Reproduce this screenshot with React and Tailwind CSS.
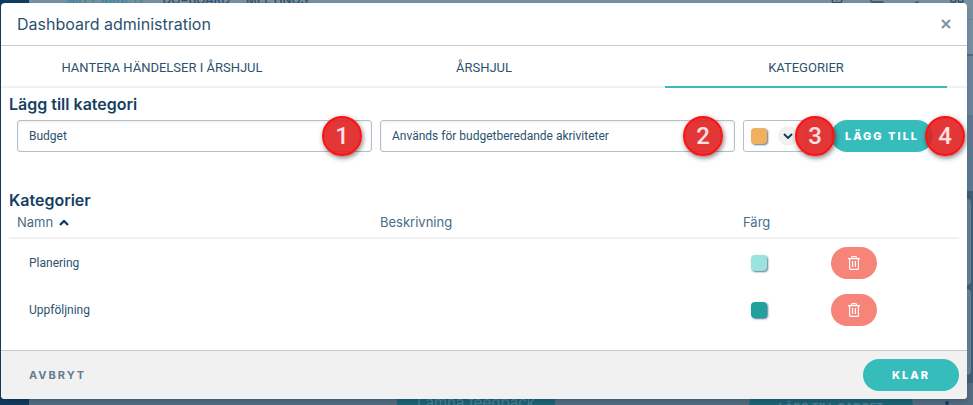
import React, { useState } from 'react';
import { Bell, ChartColumn, LayoutGrid, Smartphone } from 'lucide-react';

const TABS = ['Hantera händelser i årshjul', 'Årshjul', 'Kategorier'];

const CATEGORIES = [
    { name: 'Planering', description: '', color: 'bg-[#98e4dd]' },
    { name: 'Uppföljning', description: '', color: 'bg-[#22a09c]' },
];

// Numbered step marker
const Marker = ({ number, className }) => (
    <span
        className={`absolute top-1/2 z-10 flex size-10 -translate-y-1/2 items-center justify-center rounded-full border-2 border-[#ff1111] bg-[#e02020]/90 font-['Roboto',sans-serif] text-2xl font-medium text-white/85 shadow-[1px_2px_5px_rgba(0,0,0,0.5)] ${className}`}
    >
        {number}
    </span>
);

const Swatch = ({ color }) => (
    <span className={`block size-4 rounded shadow-[1px_1px_2px_rgba(20,60,100,0.7)] ${color}`} />
);

const TrashIcon = () => (
    <svg viewBox="0 0 12 14" className="h-3.5 w-3" fill="none" stroke="currentColor" strokeWidth="1.2">
        <path d="M0 2.6h12M3.5 2.4V1.6a1 1 0 0 1 1-1h3a1 1 0 0 1 1 1v.8M1.6 2.6v9.8a1 1 0 0 0 1 1h6.8a1 1 0 0 0 1-1V2.6M4.6 5v6M7.4 5v6" />
    </svg>
);

// Page that lies dimmed behind the dialog
const Backdrop = () => (
    <div aria-hidden="true" className="absolute inset-0 flex overflow-hidden bg-[#3c5c79]">
        <div className="w-[29px] shrink-0 bg-[#123c5f]" />
        <div className="flex min-w-0 grow flex-col">
            <div className="h-14 shrink-0 border-b-2 border-[#4b6b86] bg-[#758ea0] text-[#2b4e6d]">
                <div className="flex h-5 items-start justify-between border-b border-[#6a8497] pr-2 pl-[38px]">
                    <div className="-mt-2 flex gap-4 text-xs leading-4 font-medium">
                        <span className="text-[#35889b]">MITT ARBETE</span>
                        <span>DO=BOARD</span>
                        <span>MEETINGS</span>
                    </div>
                    <div className="-mt-3 flex gap-6">
                        <Smartphone size={16} />
                        <ChartColumn size={16} />
                        <Bell size={16} />
                        <LayoutGrid size={16} />
                    </div>
                </div>
            </div>
            <div className="h-[59px] shrink-0 bg-[#69839a]" />
            <div className="h-[76px] shrink-0 bg-[#5c7890]" />
            <div className="flex grow flex-col gap-1 pt-2 pr-0.5 pb-2">
                <div className="flex-1 rounded bg-[#657f94]" />
                <div className="flex-1 rounded bg-[#657f94]" />
            </div>
            <div className="flex h-[22px] shrink-0 items-start bg-[#526c80] pl-[368px]">
                <div className="h-8 w-[158px] bg-[#1d6475] pt-2 text-center text-[15px] leading-6 text-[#4c7f92]">
                    Lämna feedback
                </div>
                <div className="ml-auto h-12 w-[164px] rounded-full bg-[#1d6475] pt-4 text-center text-[11px] font-bold text-[#4c7f92]">
                    LÄGG TILL GADGET
                </div>
                <div className="mt-[18px] mr-6 ml-8 size-1 rounded-full bg-[#173f62]" />
            </div>
        </div>
    </div>
);

const DashboardAdministration = () => {
    const [activeTab, setActiveTab] = useState('Kategorier');
    const [name, setName] = useState('Budget');
    const [description, setDescription] = useState('Används för budgetberedande akriviteter');

    return (
        <div className="relative min-h-screen font-['Inter',sans-serif] text-[#2c5270]">
            <Backdrop />
            <div className="relative pt-[3px] pr-1.5 pb-1.5 pl-px">
                <div role="dialog" aria-labelledby="title" className="overflow-hidden rounded bg-white shadow-md">
                    <header className="flex h-[43px] items-center justify-between border-b border-[#c8cacc] px-4">
                        <h1 id="title" className="text-base">Dashboard administration</h1>
                        <button aria-label="Stäng" className="text-[#8296a6]">
                            <svg viewBox="0 0 10 10" className="size-2.5" stroke="currentColor" strokeWidth="2.2">
                                <path d="M1 1l8 8M9 1l-8 8" />
                            </svg>
                        </button>
                    </header>

                    <div role="tablist" className="flex gap-10 border-b-2 border-[#f1f1f1] px-5 font-['Roboto',sans-serif]">
                        {TABS.map(tab => (
                            <button
                                key={tab}
                                role="tab"
                                aria-selected={tab === activeTab}
                                onClick={() => setActiveTab(tab)}
                                className={`-mb-0.5 h-[42px] flex-1 border-b-2 pt-1 text-[13px] uppercase ${tab === activeTab ? 'border-[#37bcbc]' : 'border-transparent'}`}
                            >
                                {tab}
                            </button>
                        ))}
                    </div>

                    <main className="px-2">
                        <h2 className="pt-1 text-base leading-6 font-semibold text-[#173f62]">Lägg till kategori</h2>
                        <form
                            onSubmit={e => e.preventDefault()}
                            className="mt-1 flex gap-2 pl-2 font-['Roboto',sans-serif] text-xs"
                        >
                            <div className="relative flex-1">
                                <input
                                    aria-label="Namn"
                                    value={name}
                                    onChange={e => setName(e.target.value)}
                                    className="h-8 w-full rounded-[3px] border border-[#b5c0ca] px-[11px] shadow-[inset_0_1px_3px_rgba(0,0,0,0.08)]"
                                />
                                <Marker number={1} className="right-2.5" />
                            </div>
                            <div className="relative flex-1">
                                <input
                                    aria-label="Beskrivning"
                                    value={description}
                                    onChange={e => setDescription(e.target.value)}
                                    className="h-8 w-full rounded-[3px] border border-[#b5c0ca] px-[11px] shadow-[inset_0_1px_3px_rgba(0,0,0,0.08)]"
                                />
                                <Marker number={2} className="right-3" />
                            </div>
                            <div className="relative mr-4 w-16">
                                <button
                                    type="button"
                                    aria-label="Färg"
                                    className="flex h-8 w-full items-center justify-between rounded-[3px] border border-[#b5c0ca] pr-2 pl-[7px]"
                                >
                                    <Swatch color="bg-[#f0b05f]" />
                                    <span className="flex size-5 items-center justify-center rounded-full bg-[#f1f1f1] text-[#173f62]">
                                        <svg viewBox="0 0 10 6" className="h-1.5 w-2.5" fill="none" stroke="currentColor" strokeWidth="2">
                                            <path d="M1 1l4 4 4-4" />
                                        </svg>
                                    </span>
                                </button>
                                <Marker number={3} className="-right-7" />
                            </div>
                            <div className="relative w-32">
                                <button className="h-8 w-[102px] rounded-full bg-[#37bcbc] font-['Inter',sans-serif] text-[11px] font-extrabold tracking-[2px] text-white uppercase">
                                    Lägg till
                                </button>
                                <Marker number={4} className="-right-1.5" />
                            </div>
                        </form>

                        <h2 className="mt-9 text-base leading-6 font-semibold text-[#173f62]">Kategorier</h2>
                        <table className="w-full table-fixed text-left">
                            <colgroup>
                                <col />
                                <col />
                                <col className="w-20" />
                                <col className="w-34" />
                            </colgroup>
                            <thead className="border-b-2 border-[#f1f1f1] text-[13px] text-[#4a6b86]">
                                <tr className="h-[26px]">
                                    <th className="pb-1 pl-2 font-normal">
                                        <button className="flex items-center gap-1.5">
                                            Namn
                                            <svg viewBox="0 0 10 6" className="h-1.5 w-2.5 text-[#173f62]" fill="none" stroke="currentColor" strokeWidth="2.4">
                                                <path d="M1 5l4-4 4 4" />
                                            </svg>
                                        </button>
                                    </th>
                                    <th className="pb-1 pl-1 font-normal">Beskrivning</th>
                                    <th className="pb-1 font-normal">Färg</th>
                                    <th />
                                </tr>
                            </thead>
                            <tbody className="font-['Roboto',sans-serif] text-xs">
                                {CATEGORIES.map(category => (
                                    <tr key={category.name} className="h-12">
                                        <td className="pl-5">{category.name}</td>
                                        <td className="pl-4">{category.description}</td>
                                        <td className="pl-2"><Swatch color={category.color} /></td>
                                        <td>
                                            <button
                                                aria-label={`Ta bort ${category.name}`}
                                                className="ml-2 flex h-8 w-[46px] items-center justify-center rounded-full bg-[#f78478] text-white"
                                            >
                                                <TrashIcon />
                                            </button>
                                        </td>
                                    </tr>
                                ))}
                            </tbody>
                        </table>
                    </main>

                    <footer className="mt-4 flex h-[49px] items-center justify-between border-t border-[#c8cacc] bg-[#f1f1f1] pr-2 pl-7 text-[11px] font-bold">
                        <button className="tracking-[2px] text-[#5f7c94] uppercase">Avbryt</button>
                        <button className="h-8 w-24 rounded-full bg-[#37bcbc] font-extrabold tracking-[2px] text-white uppercase">Klar</button>
                    </footer>
                </div>
            </div>
        </div>
    );
};

export default DashboardAdministration;
